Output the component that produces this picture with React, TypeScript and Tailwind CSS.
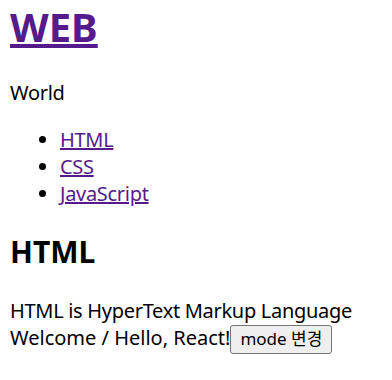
import React from "react";

export default function App() {
  const font = { fontFamily: '"Noto Sans", "Noto Sans CJK KR", sans-serif' };
  return (
    <div className="bg-white text-black pl-[10px] pr-[10px] text-[20px] leading-[27px] tracking-[-0.3px]" style={font}>
      <h1 className="m-0 text-[40px] leading-[53px] font-bold tracking-normal">
        <a href="#" className="text-[#551a8b] underline">WEB</a>
      </h1>
      <p className="mt-[26px] mb-0">World</p>
      <ul className="mt-[20px] mb-0 pl-[50px] list-disc">
        <li>
          <a href="#" className="text-[#551a8b] underline">HTML</a>
        </li>
        <li>
          <a href="#" className="text-[#551a8b] underline">CSS</a>
        </li>
        <li>
          <a href="#" className="text-[#551a8b] underline">JavaScript</a>
        </li>
      </ul>
      <h2 className="mt-[25px] mb-0 text-[30px] leading-[40px] font-bold tracking-normal">HTML</h2>
      <p className="mt-[25px] mb-0">HTML is HyperText Markup Language</p>
      <p className="m-0 tracking-normal">
        Welcome / Hello, React!
        <button className="inline-block align-baseline h-[29px] px-[9px] text-[17px] leading-[20px] tracking-normal bg-[#efefef] border border-[#767676] rounded-[3px] text-black">
          mode 변경
        </button>
      </p>
    </div>
  );
}
